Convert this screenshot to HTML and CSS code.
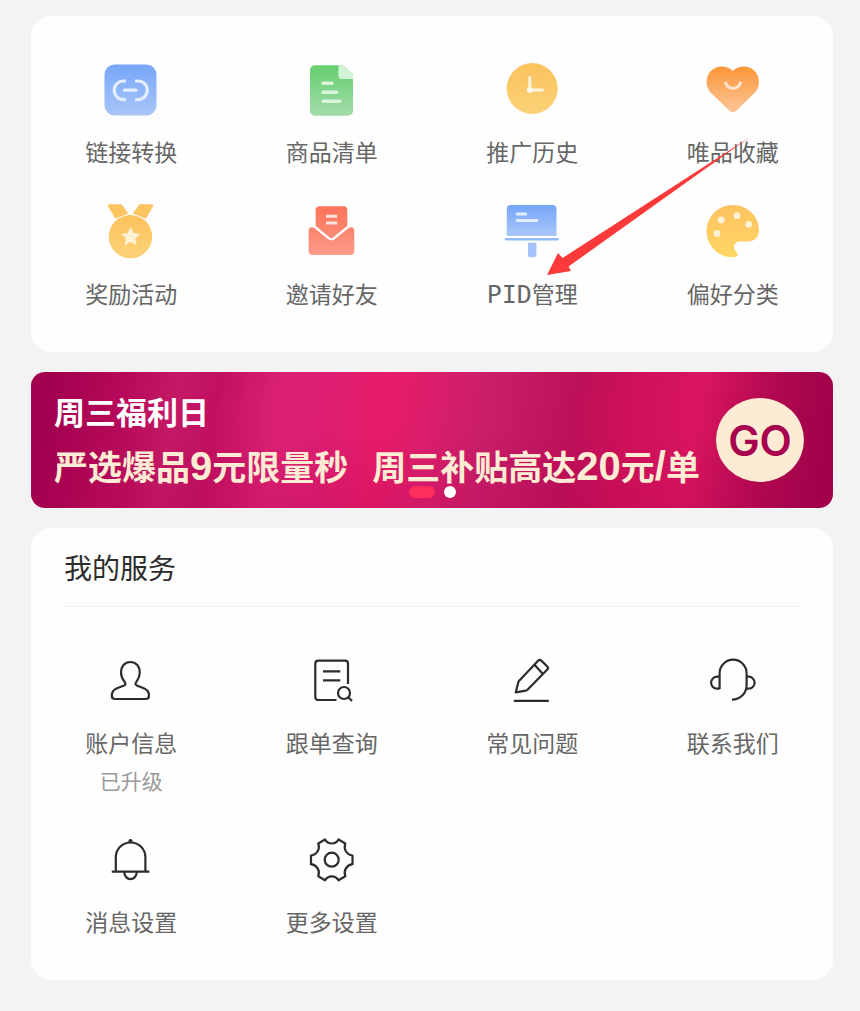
FILE: index.html
```html
<!DOCTYPE html>
<html lang="zh-CN">
<head>
    <meta charset="UTF-8">
    <meta name="viewport" content="width=device-width, initial-scale=1.0">
    <title>我的服务</title>
    <link rel="stylesheet" href="styles.css">
</head>
<body>
    <!-- 图标渐变色 -->
    <svg class="defs" width="0" height="0" aria-hidden="true">
        <defs>
            <linearGradient id="blue" x1="0" y1="0" x2="0" y2="1"><stop offset="0" stop-color="#76a6f8"/><stop offset="1" stop-color="#a9c6f9"/></linearGradient>
            <linearGradient id="green" x1="0" y1="0" x2="0" y2="1"><stop offset="0" stop-color="#66cf70"/><stop offset="1" stop-color="#a2dba8"/></linearGradient>
            <linearGradient id="yellow" x1="0" y1="0" x2="0" y2="1"><stop offset="0" stop-color="#fbc25c"/><stop offset="1" stop-color="#fbd277"/></linearGradient>
            <linearGradient id="orange" x1="0" y1="0" x2="0" y2="1"><stop offset="0" stop-color="#fc9538"/><stop offset="1" stop-color="#fdc697"/></linearGradient>
            <linearGradient id="red" gradientUnits="userSpaceOnUse" x1="0" y1="4" x2="0" y2="54"><stop offset="0" stop-color="#fe7258"/><stop offset="1" stop-color="#fb9c8a"/></linearGradient>
            <linearGradient id="palette" x1="0" y1="0" x2="0" y2="1"><stop offset="0" stop-color="#fdc261"/><stop offset="1" stop-color="#ffd664"/></linearGradient>
        </defs>
    </svg>

    <main class="page">
        <!-- 功能入口 -->
        <nav class="card grid">
            <a href="#link" class="item">
                <svg class="icon" viewBox="0 0 60 60">
                    <rect x="3.5" y="4.5" width="52" height="51" rx="10" fill="url(#blue)"/>
                    <path d="M25 21h-2.5a9.3 9.3 0 0 0 0 18.6H25M34 21h3a9.3 9.3 0 0 1 0 18.6h-3" fill="none" stroke="#e3edfe" stroke-width="3.2"/>
                    <path d="M23.5 30.2h11.5" stroke="#e3edfe" stroke-width="3.2" stroke-linecap="round"/>
                </svg>
                <span class="label">链接转换</span>
            </a>
            <a href="#goods" class="item">
                <svg class="icon" viewBox="0 0 60 60">
                    <path d="M13 5.3H41L51 14V50.7a5 5 0 0 1-5 5H13a5 5 0 0 1-5-5V10.3a5 5 0 0 1 5-5z" fill="url(#green)"/>
                    <path d="M36.5 5.3H41L51 13.5V19H39.5a3 3 0 0 1-3-3z" fill="#d3f3d6"/>
                    <path d="M21 23.2h9M21 32.3h13.5M21 41.3h17" stroke="#d9f5dc" stroke-width="3.4" stroke-linecap="round"/>
                </svg>
                <span class="label">商品清单</span>
            </a>
            <a href="#history" class="item">
                <svg class="icon" viewBox="0 0 60 60">
                    <circle cx="30.2" cy="28.5" r="25.5" fill="url(#yellow)"/>
                    <path d="M27.8 17.5V30H40.5" fill="none" stroke="#fff3dc" stroke-width="3" stroke-linecap="round"/>
                    <circle cx="27.8" cy="30" r="3" fill="#fff8ec"/>
                </svg>
                <span class="label">推广历史</span>
            </a>
            <a href="#favorite" class="item">
                <svg class="icon" viewBox="0 0 60 60">
                    <path d="M29.8 11C26.5 7.8 22.5 6.6 18.8 6.6 10 6.6 3.6 13.5 3.6 22c0 5 1.9 8.5 4.9 11.5L26.6 51q3.2 2.8 6.4 0L51 33.5c3-3 5-6.5 5-11.5C56 13.5 49.5 6.6 41 6.6c-4 0-8 1.2-11.2 4.4z" fill="url(#orange)"/>
                    <path d="M22.5 22.8c2.5 7.5 12.5 7.5 15 0" fill="none" stroke="#fee3cb" stroke-width="3" stroke-linecap="round"/>
                </svg>
                <span class="label">唯品收藏</span>
            </a>
            <a href="#reward" class="item">
                <svg class="icon" viewBox="0 0 60 60">
                    <path d="M8 2.3H20.5L27.3 11.5 14.4 16.8 7 4.3Q6.2 2.5 8 2.3zM38.5 2.3H51Q53 2.5 52 4.3L45 16.8 31.8 11.5z" fill="#fcc45f"/>
                    <circle cx="29.5" cy="34.7" r="21.7" fill="url(#yellow)"/>
                    <path d="M29.6 24.8l2.9 6.3 6.9.8-5.1 4.7 1.4 6.8-6.1-3.4-6.1 3.4 1.4-6.8-5.1-4.7 6.9-.8z" fill="#fff1d6"/>
                </svg>
                <span class="label">奖励活动</span>
            </a>
            <a href="#invite" class="item">
                <svg class="icon" viewBox="0 0 60 60">
                    <path d="M17.6 4.3H41.3a4 4 0 0 1 4 4V24L31.5 35.3q-2.2 1.7-4.4 0L13.6 24V8.3a4 4 0 0 1 4-4z" fill="url(#red)"/>
                    <path d="M12.5 26L26.8 37q2.6 2 5.2 0L46.5 26c2.3-1.7 5.8-.8 5.8 2V49a4 4 0 0 1-4 4H10.6a4 4 0 0 1-4-4V28c0-2.8 3.5-3.7 5.9-2z" fill="url(#red)"/>
                    <path d="M13 25L26.8 36.5q2.6 1.8 5.2 0L46 25" fill="none" stroke="#fff" stroke-width="2"/>
                    <path d="M24 14.2h11.2M24 21h11.2" stroke="#ffe3dd" stroke-width="3"/>
                </svg>
                <span class="label">邀请好友</span>
            </a>
            <div class="item-wrap">
                <a href="#pid" class="item">
                    <svg class="icon" viewBox="0 0 60 60">
                        <path d="M8.8 3H50.5a4 4 0 0 1 4 4V34H4.8V7a4 4 0 0 1 4-4z" fill="url(#blue)"/>
                        <rect x="2.8" y="35.9" width="54" height="2.5" rx="1.2" fill="#94b9f9"/>
                        <path d="M26 40.7h8.4V53a2.3 2.3 0 0 1-2.3 2.3h-3.8A2.3 2.3 0 0 1 26 53z" fill="#a5c4f9"/>
                        <path d="M15.2 12h8.5M15.2 18.4h19.6" stroke="#e3edfe" stroke-width="3" stroke-linecap="round"/>
                    </svg>
                    <span class="label"><span class="latin">PID</span>管理</span>
                </a>
                <!-- 红色指示箭头 -->
                <svg class="pointer" viewBox="0 0 206 142" aria-hidden="true">
                    <path d="M1 139L12 117 16.5 122 204 1 22.5 130.5 25 135z" fill="#fd3a3a"/>
                </svg>
            </div>
            <a href="#category" class="item">
                <svg class="icon" viewBox="0 0 60 60">
                    <path d="M29.8 3C15.2 3 3.6 14.8 3.6 29.2S15.2 55.3 29.8 55.3c3.7 0 6.2-1.2 4.3-4.3C32 48.5 31 46.8 31 44.8c0-3.3 2.6-5.3 6-5.3h7.5C51.5 39.5 56 35 56 28 56 14 44.3 3 29.8 3z" fill="url(#palette)"/>
                    <g fill="#fff1d6">
                        <circle cx="34" cy="13.7" r="3.4"/>
                        <circle cx="18.3" cy="18" r="3.4"/>
                        <circle cx="45.6" cy="22.4" r="3.4"/>
                        <circle cx="14" cy="31.5" r="3.4"/>
                    </g>
                </svg>
                <span class="label">偏好分类</span>
            </a>
        </nav>

        <!-- 活动横幅 -->
        <section class="banner">
            <div class="banner-text">
                <h2 class="banner-title">周三福利日</h2>
                <p class="banner-desc">
                    <span>严选爆品<span class="num">9</span>元限量秒</span>
                    <span>周三补贴高达<span class="num">20</span>元<span class="num">/</span>单</span>
                </p>
            </div>
            <a href="#go" class="go">GO</a>
            <div class="dots"><span class="dot active"></span><span class="dot"></span></div>
        </section>

        <!-- 我的服务 -->
        <section class="card">
            <h2 class="card-title">我的服务</h2>
            <nav class="grid">
                <a href="#account" class="item">
                    <svg class="icon line" viewBox="0 0 60 60">
                        <path d="M29.4 11C23.5 11 20 15.5 20 21.5c0 5 2.3 7.8 4 10 1 1.5.3 2.5-1.5 3.2L16 37.3C12 39 10.8 41 10.8 44.5c0 2.5 1 3.5 3.2 3.5H44.8C47 48 48 47 48 44.5c0-3.5-1.2-5.5-5.2-7.2L36.3 34.7c-1.8-.7-2.3-1.7-1.3-3.2 1.5-2.2 3.8-5 3.8-10C38.8 15.5 35.3 11 29.4 11z"/>
                    </svg>
                    <span class="label">账户信息</span>
                    <span class="note">已升级</span>
                </a>
                <a href="#orders" class="item">
                    <svg class="icon line" viewBox="0 0 60 60">
                        <path d="M46 33V12.7a3 3 0 0 0-3-3H16.3a3 3 0 0 0-3 3V46a3 3 0 0 0 3 3H34.5M21 20.3H38.3M21 29.3H38.3"/>
                        <circle cx="42" cy="42" r="6"/>
                        <path d="M46.5 46.5L50 50"/>
                    </svg>
                    <span class="label">跟单查询</span>
                </a>
                <a href="#faq" class="item">
                    <svg class="icon line" viewBox="0 0 60 60">
                        <path d="M13.8 41.3L16.5 30.5 36.3 9.6q1.5-1.5 3 0L45.3 15.5q1.5 1.5 0 3L25.5 38.7q-.8.8-1.8 1zM32.5 13.7L40.5 22.5M11.8 49.8H46.8"/>
                    </svg>
                    <span class="label">常见问题</span>
                </a>
                <a href="#contact" class="item">
                    <svg class="icon line" viewBox="0 0 60 60">
                        <path d="M16.6 38V22.2a13.5 13.5 0 0 1 27 0V34C43.6 42 37.5 48.7 29 48.7M16.6 25.7h-2.5a6 6 0 0 0 0 12h2.5M43.6 25.7h2a6 6 0 0 1 0 12h-2.5"/>
                    </svg>
                    <span class="label">联系我们</span>
                </a>
                <a href="#message" class="item">
                    <svg class="icon line" viewBox="0 0 60 60">
                        <path d="M14.8 41.7V27.3a14.8 14.8 0 0 1 29.6 0V41.7M10.8 41.7H48.4M23.2 41.7a6.3 7.4 0 0 0 12.6 0"/>
                        <circle cx="29.5" cy="11" r="1"/>
                    </svg>
                    <span class="label">消息设置</span>
                </a>
                <a href="#settings" class="item">
                    <svg class="icon line" viewBox="0 0 60 60">
                        <path d="M23 9.5C26 14.8 33.5 14.8 36.5 9.5L43.3 13.5C41.3 19 44.5 24.8 50.5 25.5V34.2C44.5 35 41.3 40.5 43.3 46.3L36.5 50.3C33.5 45 26 45 23 50.3L16.3 46.3C18.3 40.5 15 35 9 34.2V25.5C15 24.8 18.3 19 16.3 13.5z"/>
                        <circle cx="29.7" cy="29.7" r="7"/>
                    </svg>
                    <span class="label">更多设置</span>
                </a>
            </nav>
        </section>
    </main>
</body>
</html>
```

FILE: styles.css
```css
/* 全局样式 */
* {
    box-sizing: border-box;
}

body {
    margin: 0;
    background: #f3f3f3;
    color: #666;
    font-family: "Noto Sans CJK SC", sans-serif;
}

h2,
p {
    margin: 0;
}

a {
    text-decoration: none;
    color: inherit;
}

.defs {
    position: absolute;
}

.page {
    display: flex;
    flex-direction: column;
    gap: 20px;
    padding: 16px 27px 31px 31px;
}

.card {
    background: #fefefe;
    border-radius: 20px;
}

/* 图标网格 */
.grid {
    display: grid;
    grid-template-columns: repeat(4, 1fr);
    row-gap: 36px;
    padding: 44px 0;
}

.item {
    display: flex;
    flex-direction: column;
    align-items: center;
}

.item-wrap {
    position: relative;
}

.icon {
    width: 60px;
    height: 60px;
    margin-bottom: 16px;
}

.line {
    fill: none;
    stroke: #2c2c2c;
    stroke-width: 2.2;
    stroke-linejoin: round;
}

.label {
    font-size: 23px;
    line-height: 30px;
    white-space: nowrap;
}

.latin {
    font-family: "DejaVu Sans Mono", monospace;
    font-size: 25px;
    line-height: 1;
}

.note {
    margin-top: 10px;
    font-size: 21px;
    line-height: 27px;
    color: #999;
}

.pointer {
    position: absolute;
    left: calc(50% + 14px);
    top: -66px;
    width: 206px;
    height: 142px;
    pointer-events: none;
}

/* 活动横幅 */
.banner {
    position: relative;
    display: flex;
    justify-content: space-between;
    align-items: center;
    min-height: 136px;
    padding: 0 29px 0 23px;
    border-radius: 14px;
    background:
        linear-gradient(to bottom, rgba(170, 0, 80, 0) 40%, rgba(170, 0, 80, 0.2) 100%),
        linear-gradient(98deg, #a40050 3%, #b80a5a 12%, #c41a66 18%, #c21061 23%, #dc2174 31%, #de1e70 37%, #e81b69 44%, #d91e6c 50%, #c81e68 57%, #bd1058 67%, #d0105a 74%, #da1560 82%, #b00850 91%, #9d0048 100%);
}

.banner-title {
    font-size: 31px;
    line-height: 40px;
    color: #fff;
}

.banner-desc {
    display: flex;
    gap: 24px;
    margin-top: 11px;
    font-size: 34px;
    line-height: 48px;
    font-weight: bold;
    color: #fdecd3;
    white-space: nowrap;
}

.num {
    font-family: "Liberation Sans", Arial, sans-serif;
    font-size: 40px;
    line-height: 1;
}

.go {
    display: flex;
    justify-content: center;
    align-items: center;
    width: 88px;
    height: 84px;
    border-radius: 50%;
    background: #fdecd3;
    color: #a8004f;
    font-family: Inter, sans-serif;
    font-size: 42px;
    font-weight: 600;
}

.dots {
    position: absolute;
    left: 0;
    right: 0;
    bottom: 10px;
    display: flex;
    justify-content: center;
    gap: 9px;
}

.dot {
    width: 12px;
    height: 12px;
    border-radius: 6px;
    background: #fff;
}

.dot.active {
    width: 26px;
    background: #ff2d5b;
}

/* 我的服务 */
.card-title {
    margin: 0 33px;
    padding: 19px 0;
    border-bottom: 1px solid #eef0f1;
    font-size: 28px;
    line-height: 40px;
    font-weight: normal;
    color: #2c2c2c;
}
```
